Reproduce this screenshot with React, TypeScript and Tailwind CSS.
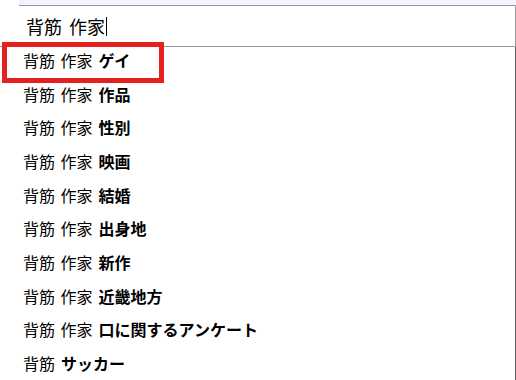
const rows: [string, string][] = [
  ['背筋 作家', 'ゲイ'],
  ['背筋 作家', '作品'],
  ['背筋 作家', '性別'],
  ['背筋 作家', '映画'],
  ['背筋 作家', '結婚'],
  ['背筋 作家', '出身地'],
  ['背筋 作家', '新作'],
  ['背筋 作家', '近畿地方'],
  ['背筋 作家', '口に関するアンケート'],
  ['背筋', 'サッカー'],
];

function App() {
  return (
    <div
      className="relative w-[516px] h-[380px] overflow-hidden bg-white text-black"
      style={{ fontFamily: '"Noto Sans CJK JP", "Noto Sans", sans-serif' }}
    >
      {/* search box */}
      <div className="ml-[19px] h-[5px] bg-[#eff4fe]" />
      <div className="relative z-10 border-b border-[#9a9a9a]">
        <div className="ml-[19px] h-[41px] border-t border-r border-[#9a9a9a] flex items-center pl-[7px]">
          <span className="text-[18px] leading-none [word-spacing:3px]">背筋 作家</span>
          <span className="ml-[1px] w-px h-[19px] bg-black" />
        </div>
      </div>

      {/* suggestions */}
      <div className="border-r border-[#5f5f5f] h-[340px] -mt-[4px]">
        {rows.map(([q, s], i) => (
          <div key={i} className="h-[33.7px] flex items-center pl-[23px] text-[16px] [word-spacing:2px]">
            <span>{q}</span>
            <span className="ml-[6px] font-bold">{s}</span>
          </div>
        ))}
      </div>

      {/* highlight annotation */}
      <div className="absolute z-20 left-[2px] top-[42px] w-[162px] h-[41px] border-[5px] border-[#e5211f]" />
    </div>
  );
}

export default App;
